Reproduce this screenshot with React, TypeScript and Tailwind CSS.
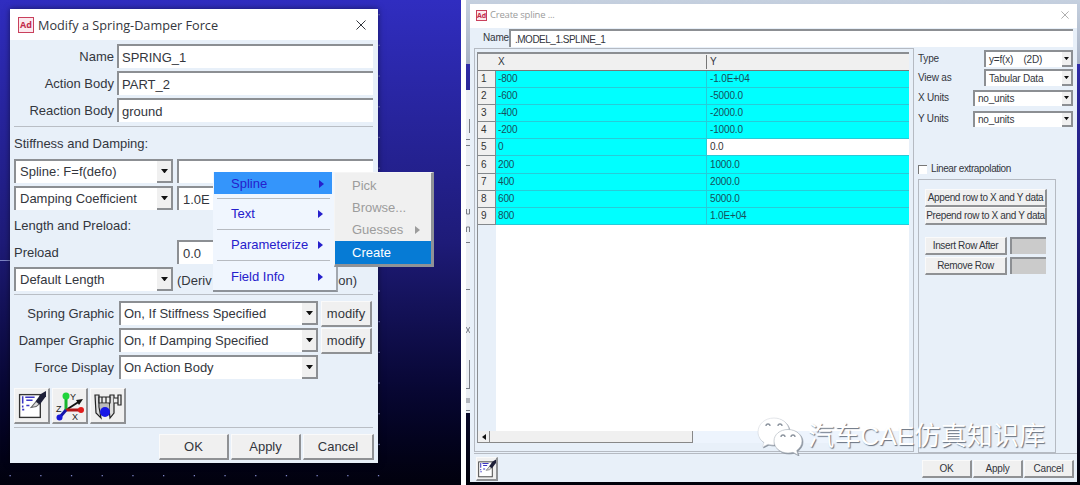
import type { ReactNode } from 'react'
import { clsx } from 'clsx'

const tableRows = [
  { x: '-800', y: '-1.0E+04' },
  { x: '-600', y: '-5000.0' },
  { x: '-400', y: '-2000.0' },
  { x: '-200', y: '-1000.0' },
  { x: '0', y: '0.0', active: true },
  { x: '200', y: '1000.0' },
  { x: '400', y: '2000.0' },
  { x: '600', y: '5000.0' },
  { x: '800', y: '1.0E+04' },
]

function AdamsLogo({ className }: { className?: string }) {
  return (
    <span
      className={clsx(
        'flex items-center justify-center border border-[#c9405c] bg-[#fbe9ee] font-bold leading-none text-[#c22b4b]',
        className,
      )}
    >
      Ad
    </span>
  )
}

function CloseIcon({ className }: { className?: string }) {
  return (
    <svg viewBox="0 0 10 10" className={className} fill="none" stroke="currentColor">
      <path d="M0.5 0.5l9 9M9.5 0.5l-9 9" />
    </svg>
  )
}

function NoteIcon({ className }: { className?: string }) {
  return (
    <svg viewBox="0 0 28 28" className={className} fill="none">
      <rect x="2.5" y="3.5" width="20" height="22" fill="#fff" stroke="#333" strokeWidth="1.3" />
      <path d="M5.5 5v7M5.5 14v2M8 6h9M9 9h6M9 14h3M5 18h2" stroke="#3b36c4" strokeWidth="1.5" />
      <path d="M13.5 16l5-6 3 2.5-3 2.5z" fill="#ddd" stroke="#666" />
      <path d="M18 10l5-7 5-3v5l-6 8z" fill="#1d1f38" />
    </svg>
  )
}

function AxesIcon() {
  return (
    <svg viewBox="0 0 30 30" className="size-[30px]" fontFamily="Liberation Sans" fontSize="9" fill="#222">
      <path d="M11 19L25 10" stroke="#111" strokeWidth="2" />
      <path d="M21 9l7-1-4 6z" fill="#111" />
      <path d="M11 19V5" stroke="#16b52d" strokeWidth="3" />
      <circle cx="11" cy="5" r="3.5" fill="#20d43b" />
      <path d="M11 19h15" stroke="#b01818" strokeWidth="3" />
      <circle cx="26" cy="19" r="3" fill="#e01b1b" />
      <path d="M11 19l-6 7" stroke="#1414a8" strokeWidth="3" />
      <circle cx="4.5" cy="26.5" r="3" fill="#1818d8" />
      <text x="15" y="9">Y</text>
      <text x="1" y="21">Z</text>
      <text x="17" y="29">X</text>
    </svg>
  )
}

function MeasureIcon() {
  return (
    <svg viewBox="0 0 30 30" className="size-[30px]" fill="none" stroke="#222" strokeWidth="1.2">
      <path d="M2 4h4v12l2 11-5-5z" fill="#ddd" />
      <path d="M17 4h4v18l-4 5-1-9z" fill="#ddd" />
      <path d="M6 6h11v6H6zM9 6v6M13 6v6M21 7h4v5h-4M25 4h3v10h-3z" fill="#eee" />
      <path d="M7 13h9v6H7z" fill="#bbb" stroke="none" />
      <circle cx="12" cy="21" r="5" fill="#1717e6" stroke="none" />
    </svg>
  )
}

function WechatIcon() {
  return (
    <svg viewBox="0 0 46 38" className="h-[38px] w-[46px] drop-shadow-[1px_1px_0.5px_#8a929d]">
      <path
        d="M17 1C8 1 1 7 1 15c0 4.5 2.3 8 6 10.5L5.5 30l5.5-2.8c2 .6 4 .9 6 .8C17 19 24 13 32 12.5 31 6 25 1 17 1z"
        fill="#fff"
        stroke="#d3d7dd"
        strokeWidth=".6"
      />
      <path
        d="M31 12.5c-8 0-14 5-14 11.5s6 12 14 12c1.7 0 3.3-.2 5-.7l5 2.7-1.3-4.5C43 31 45 28 45 24c0-6.5-6-11.5-14-11.5z"
        fill="#fff"
        stroke="#aab1bb"
        strokeWidth=".6"
      />
      <g fill="none" stroke="#8a929d" strokeWidth="1.3">
        <path d="M9 9a2 2 0 0 1 4 0M21 9a2 2 0 0 1 4 0M24 20a2 2 0 0 1 4 0M34 20a2 2 0 0 1 4 0" />
      </g>
    </svg>
  )
}

function Field({ children, className }: { children?: ReactNode; className?: string }) {
  return (
    <div
      className={clsx(
        'flex items-center border-t-2 border-l-2 border-[#8c8f93] bg-white whitespace-nowrap',
        className,
      )}
    >
      {children}
    </div>
  )
}

function Combo({ children, className, small }: { children: ReactNode; className?: string; small?: boolean }) {
  return (
    <div
      className={clsx(
        'flex shrink-0 items-stretch justify-between border-t-2 border-l-2 border-[#8c8f93] bg-white whitespace-nowrap',
        small ? 'pl-[3px]' : 'pl-1',
        className,
      )}
    >
      <span className="flex items-center whitespace-pre">{children}</span>
      <span
        className={clsx(
          'flex items-center justify-center border-r-2 border-b-2 border-[#8c8f93] bg-[#f0f0f0]',
          small ? 'w-[11px]' : 'w-4',
        )}
      >
        <svg viewBox="0 0 8 5" className={small ? 'w-[5px]' : 'w-[7px]'}>
          <path d="M0 0h8L4 5z" fill="#111" />
        </svg>
      </span>
    </div>
  )
}

function PushButton({ children, className }: { children: ReactNode; className?: string }) {
  return (
    <button
      className={clsx(
        'flex shrink-0 items-center justify-center border-t border-r-2 border-b-2 border-l border-t-[#fafafa] border-r-[#8f9194] border-b-[#8f9194] border-l-[#fafafa] bg-[#f0f0f0] whitespace-nowrap',
        className,
      )}
    >
      {children}
    </button>
  )
}

function Arrow() {
  return (
    <svg viewBox="0 0 5 8" className="h-2 w-[5px]">
      <path d="M0 0l5 4-5 4z" fill="currentColor" />
    </svg>
  )
}

function MenuItem({ children, last }: { children: ReactNode; last?: boolean }) {
  return (
    <div
      className={clsx(
        'mr-[6px] ml-1 flex h-[31px] items-center justify-between pr-[7px] pl-[14px]',
        !last && 'border-b border-[#b7bbc1]',
      )}
    >
      <span>{children}</span>
      <Arrow />
    </div>
  )
}

function ContextMenu() {
  return (
    <div className="absolute top-[172px] left-[213px] flex items-start text-[13px]">
      <div className="h-[120px] w-[125px] border-r-2 border-b-2 border-r-[#a3a8af] border-b-[#8d9299] bg-[#f0f6fe] text-[#2620cc]">
        <div className="mb-[4px] ml-px flex h-[22px] w-[118px] items-center justify-between bg-[#3495fb] pt-px pr-[8px] pl-[17px]">
          <span>Spline</span>
          <Arrow />
        </div>
        <div className="mr-[6px] ml-1 border-t border-[#b7bbc1]" />
        <MenuItem>Text</MenuItem>
        <MenuItem>Parameterize</MenuItem>
        <MenuItem last>Field Info</MenuItem>
      </div>
      <div className="-ml-[4px] w-[100px] border border-r-[3px] border-b-[3px] border-[#f5f5f5] border-r-[#8f9297] border-b-[#8f9297] bg-[#f0f0f0] pt-[2px] text-[#9c9c9c]">
        <div className="flex h-[22px] items-center pl-[17px]">Pick</div>
        <div className="flex h-[22px] items-center pl-[17px]">Browse...</div>
        <div className="flex h-[22px] items-center justify-between pr-[11px] pl-[17px]">
          Guesses
          <Arrow />
        </div>
        <div className="flex h-[23px] items-center bg-[#067bd5] pl-[17px] text-white">Create</div>
      </div>
    </div>
  )
}

function FormRow({ label, children, className }: { label: string; children: ReactNode; className?: string }) {
  return (
    <div className={clsx('flex h-[27px] items-start', className)}>
      <span className="h-6 shrink-0 text-right leading-[26px]">{label}</span>
      {children}
    </div>
  )
}

function SpringDialog() {
  return (
    <div className="mt-[9px] ml-[10px] flex h-[454px] w-[368px] flex-col bg-[#e8f0f9] text-[13px] leading-6 text-[#33363d] shadow-[0_0_6px_rgba(0,0,0,0.5)]">
      <div className="flex h-[31px] items-center bg-white px-2 font-['Open_Sans','Noto_Sans',sans-serif] text-[12.7px]">
        <AdamsLogo className="size-4 text-[9px]" />
        <span className="ml-1">Modify a Spring-Damper Force</span>
        <CloseIcon className="mr-1 ml-auto size-[10px]" />
      </div>
      <div className="mt-1 ml-1 w-[359px] border-b border-[#b9bec5] pb-[1px]">
        <FormRow label="Name" className="[&>span]:w-[103px] [&>span]:pr-[3px]">
          <Field className="h-6 w-[256px] pt-[2px] pl-[3px]">SPRING_1</Field>
        </FormRow>
        <FormRow label="Action Body" className="[&>span]:w-[103px] [&>span]:pr-[3px]">
          <Field className="h-6 w-[256px] pt-[2px] pl-[3px]">PART_2</Field>
        </FormRow>
        <FormRow label="Reaction Body" className="[&>span]:w-[103px] [&>span]:pr-[3px]">
          <Field className="h-6 w-[256px] pt-[2px] pl-[3px]">ground</Field>
        </FormRow>
      </div>
      <div className="ml-1 h-[168px] w-[359px] border-b border-[#b9bec5] pt-[5px]">
        <div className="h-[27px]">Stiffness and Damping:</div>
        <div className="flex h-[27px] gap-[4px]">
          <Combo className="h-6 w-[159px]">Spline: F=f(defo)</Combo>
          <Field className="h-6 w-[196px] pl-1" />
        </div>
        <div className="flex h-[27px] gap-[4px]">
          <Combo className="h-6 w-[159px]">Damping Coefficient</Combo>
          <Field className="h-6 w-[196px] pt-[2px] pl-1">1.0E</Field>
        </div>
        <div className="h-[27px] leading-[26px]">Length and Preload:</div>
        <div className="flex h-[27px]">
          <span className="w-[163px] leading-[26px]">Preload</span>
          <Field className="h-6 w-[196px] pt-[2px] pl-1">0.0</Field>
        </div>
        <div className="flex h-[27px] gap-[4px]">
          <Combo className="h-6 w-[159px]">Default Length</Combo>
          <span className="flex w-[180px] justify-between pt-[2px] whitespace-nowrap">
            <span>(Deriv</span>
            <span>on)</span>
          </span>
        </div>
      </div>
      <div className="ml-1 flex h-[133px] w-[359px] flex-col border-b border-[#b9bec5] pt-[6px]">
        <FormRow label="Spring Graphic" className="[&>span]:w-[105px] [&>span]:pr-[5px]">
          <Combo className="h-6 w-[199px] pl-[3px]">On, If Stiffness Specified</Combo>
          <PushButton className="ml-[3px] h-[26px] w-[51px]">modify</PushButton>
        </FormRow>
        <FormRow label="Damper Graphic" className="[&>span]:w-[105px] [&>span]:pr-[5px]">
          <Combo className="h-6 w-[199px] pl-[3px]">On, If Damping Specified</Combo>
          <PushButton className="ml-[3px] h-[26px] w-[51px]">modify</PushButton>
        </FormRow>
        <FormRow label="Force Display" className="[&>span]:w-[105px] [&>span]:pr-[5px]">
          <Combo className="h-6 w-[199px] pl-[3px]">On Action Body</Combo>
        </FormRow>
        <div className="mt-[6px] flex gap-[2px]">
          <PushButton className="size-9">
            <NoteIcon className="size-[29px]" />
          </PushButton>
          <PushButton className="size-9">
            <AxesIcon />
          </PushButton>
          <PushButton className="size-9">
            <MeasureIcon />
          </PushButton>
        </div>
      </div>
      <div className="mt-[6px] mr-1 flex justify-end gap-[2px]">
        <PushButton className="h-[26px] w-[70px]">OK</PushButton>
        <PushButton className="h-[26px] w-[70px]">Apply</PushButton>
        <PushButton className="h-[26px] w-[71px]">Cancel</PushButton>
      </div>
    </div>
  )
}

function SplineTable() {
  return (
    <div className="mt-[3px] ml-[2px] flex h-[391px] w-[432px] flex-col border-t-2 border-l border-[#8b8e92] tracking-[-0.15px]">
      <div className="flex h-[17px] shrink-0 items-center border-b border-[#777] bg-[#f0f0f0]">
        <span className="w-[229px] border-r border-[#777] pl-5">X</span>
        <span className="pl-[3px]">Y</span>
      </div>
      {tableRows.map((row, i) => (
        <div key={row.x} className="flex h-[17.1px] shrink-0 text-[#174f5c]">
          <span className="flex w-[18px] items-center border-r border-b border-[#84888c] bg-[#f0f0f0] pl-[3px] text-[#333]">
            {i + 1}
          </span>
          <span className="flex w-[211px] items-center border-r border-b border-[#28cbd8] bg-[#00ffff] pl-[2px]">
            {row.x}
          </span>
          <span
            className={clsx(
              'flex flex-1 items-center border-b border-[#28cbd8] pl-[3px]',
              row.active ? 'bg-white text-[#333]' : 'bg-[#00ffff]',
            )}
          >
            {row.y}
          </span>
        </div>
      ))}
      <div className="ml-[18px] flex-1 bg-white" />
      <div className="flex h-[12px] shrink-0 bg-[#edf4fd]">
        <span className="flex w-[12px] items-center justify-center border-r border-b border-[#888] bg-[#f0f0f0]">
          <svg viewBox="0 0 4 6" className="h-[6px] w-1">
            <path d="M4 0v6L0 3z" fill="#111" />
          </svg>
        </span>
        <span className="w-[203px] border-r border-b border-[#888] bg-[#f0f0f0]" />
      </div>
    </div>
  )
}

function OptionRow({ label, value, className }: { label: string; value: string; className: string }) {
  return (
    <div className="flex items-center justify-between">
      <span>{label}</span>
      <Combo small className={className}>
        {value}
      </Combo>
    </div>
  )
}

function SplineDialog() {
  return (
    <div className="flex h-[478px] w-[607px] flex-col bg-[#e8f0f9] text-[10px] leading-[14px] tracking-[-0.2px] text-[#33363d]">
      <div className="flex h-[24px] shrink-0 items-center bg-white pr-2 pb-[2px] pl-[6px] font-['Open_Sans','Noto_Sans',sans-serif] text-[9.5px] text-[#9b9b9b]">
        <AdamsLogo className="size-[11px] text-[7px]" />
        <span className="ml-[3px]">Create spline ...</span>
        <CloseIcon className="ml-auto size-2" />
      </div>
      <div className="flex h-[20px] shrink-0 items-center pl-[13px]">
        <span className="w-[26px]">Name</span>
        <Field className="h-[18px] w-[564px] pt-px pl-1 tracking-[-0.5px]">.MODEL_1.SPLINE_1</Field>
      </div>
      <div className="ml-1 flex h-[406px] shrink-0 border-b border-[#b5bac2]">
        <div className="h-[404px] w-[440px] border border-[#b5bac2]">
          <SplineTable />
        </div>
        <div className="flex w-[159px] flex-col pt-[2px] pl-1">
          <OptionRow label="Type" value="y=f(x)    (2D)" className="h-[17px] w-[89px]" />
          <div className="h-[2px]" />
          <OptionRow label="View as" value="Tabular Data" className="h-[17px] w-[89px]" />
          <div className="h-1" />
          <OptionRow label="X Units" value="no_units" className="h-4 w-[100px]" />
          <div className="h-[5px]" />
          <OptionRow label="Y Units" value="no_units" className="h-4 w-[100px]" />
          <div className="mt-[35px] flex h-[14px] items-center gap-[4px]">
            <span className="size-[9px] border-t border-l border-[#777] bg-white" />
            <span className="tracking-[-0.4px]">Linear extrapolation</span>
          </div>
          <div className="mt-[3px] flex h-[274px] w-[138px] flex-col border border-[#b5bac2] pt-[9px] pl-[6px] tracking-[-0.35px]">
            <PushButton className="h-[18px] w-[122px]">Append row to X and Y data</PushButton>
            <PushButton className="h-[18px] w-[122px]">Prepend row to X and Y data</PushButton>
            <div className="mt-3 flex gap-[3px]">
              <PushButton className="h-[18px] w-[82px]">Insert Row After</PushButton>
              <span className="h-[17px] w-9 border-t-2 border-l-2 border-[#8c8f93] bg-[#cbcbcb]" />
            </div>
            <div className="mt-[2px] flex gap-[3px]">
              <PushButton className="h-[18px] w-[82px]">Remove Row</PushButton>
              <span className="h-[17px] w-9 border-t-2 border-l-2 border-[#8c8f93] bg-[#cbcbcb]" />
            </div>
          </div>
        </div>
      </div>
      <div className="flex items-start pt-[3px] pr-[3px] pl-[6px]">
        <PushButton className="h-6 w-[22px]">
          <NoteIcon className="size-5" />
        </PushButton>
        <div className="mt-[3px] ml-auto flex gap-[1px]">
          <PushButton className="h-[18px] w-[50px]">OK</PushButton>
          <PushButton className="h-[18px] w-[50px]">Apply</PushButton>
          <PushButton className="h-[18px] w-[50px]">Cancel</PushButton>
        </div>
      </div>
    </div>
  )
}

// Edge of the dialog behind the spline editor
function BackWindowEdge() {
  return (
    <svg viewBox="0 0 4 323" className="mt-[90px] h-[323px] w-1 shrink-0" fill="none" stroke="#777b84">
      <rect width="4" height="323" fill="#eceff4" stroke="none" />
      <path d="M3.5 29v14M0 49.5h4M0 55.5h4M0 75.5h4M0 152.5h4M0 199.5h4" />
      <path d="M.5 119v5h3v-5M.5 142v-5h3v5M0 237l4 6M0 243l4-6M3.5 270v28M0 298.5h4M0 320.5h4" />
      <path d="M1 308v5M3 308v5" />
    </svg>
  )
}

// Grid points of the modelling canvas, visible around the dialog
function GridDots() {
  return (
    <svg viewBox="0 0 461 485" className="absolute inset-0 h-[485px] w-[461px]" fill="#7d83c4">
      {Array.from({ length: 13 }, (_, i) => (
        <rect key={i} x={9.5 + i * 30.7} y="475" width="1.3" height="1.3" />
      ))}
      {Array.from({ length: 15 }, (_, i) => (
        <rect key={i} x="378.5" y={14 + i * 30.7} width="1.3" height="1.3" />
      ))}
      <rect x="0" y="260" width="10" height="1" />
    </svg>
  )
}

export default function App() {
  return (
    <div className="relative flex h-[485px] w-[1080px] overflow-hidden bg-white font-['Liberation_Sans',Arial,sans-serif]">
      <div className="relative w-[461px] bg-linear-to-b from-[#302dc0] via-[#1e1b78] to-[#01010d]">
        <GridDots />
        <div className="relative flex">
          <SpringDialog />
        </div>
        <ContextMenu />
      </div>
      <div className="ml-[5px] flex w-[614px] items-start bg-[linear-gradient(to_bottom,#c5d0df_0,#a8b2c4_64px,#302ca8_64px,#2b2898_90px,#1d1a72_50%,#01010a_100%)]">
        <BackWindowEdge />
        <div className="mt-1">
          <SplineDialog />
        </div>
      </div>
      <div className="absolute top-[417px] left-[757px] flex items-center gap-[5px]">
        <WechatIcon />
        <span className="font-['Liberation_Sans','Noto_Sans_CJK_SC',sans-serif] text-[26.2px] leading-[38px] whitespace-nowrap text-white [text-shadow:1px_1px_1px_#687280]">
          汽车CAE仿真知识库
        </span>
      </div>
    </div>
  )
}
